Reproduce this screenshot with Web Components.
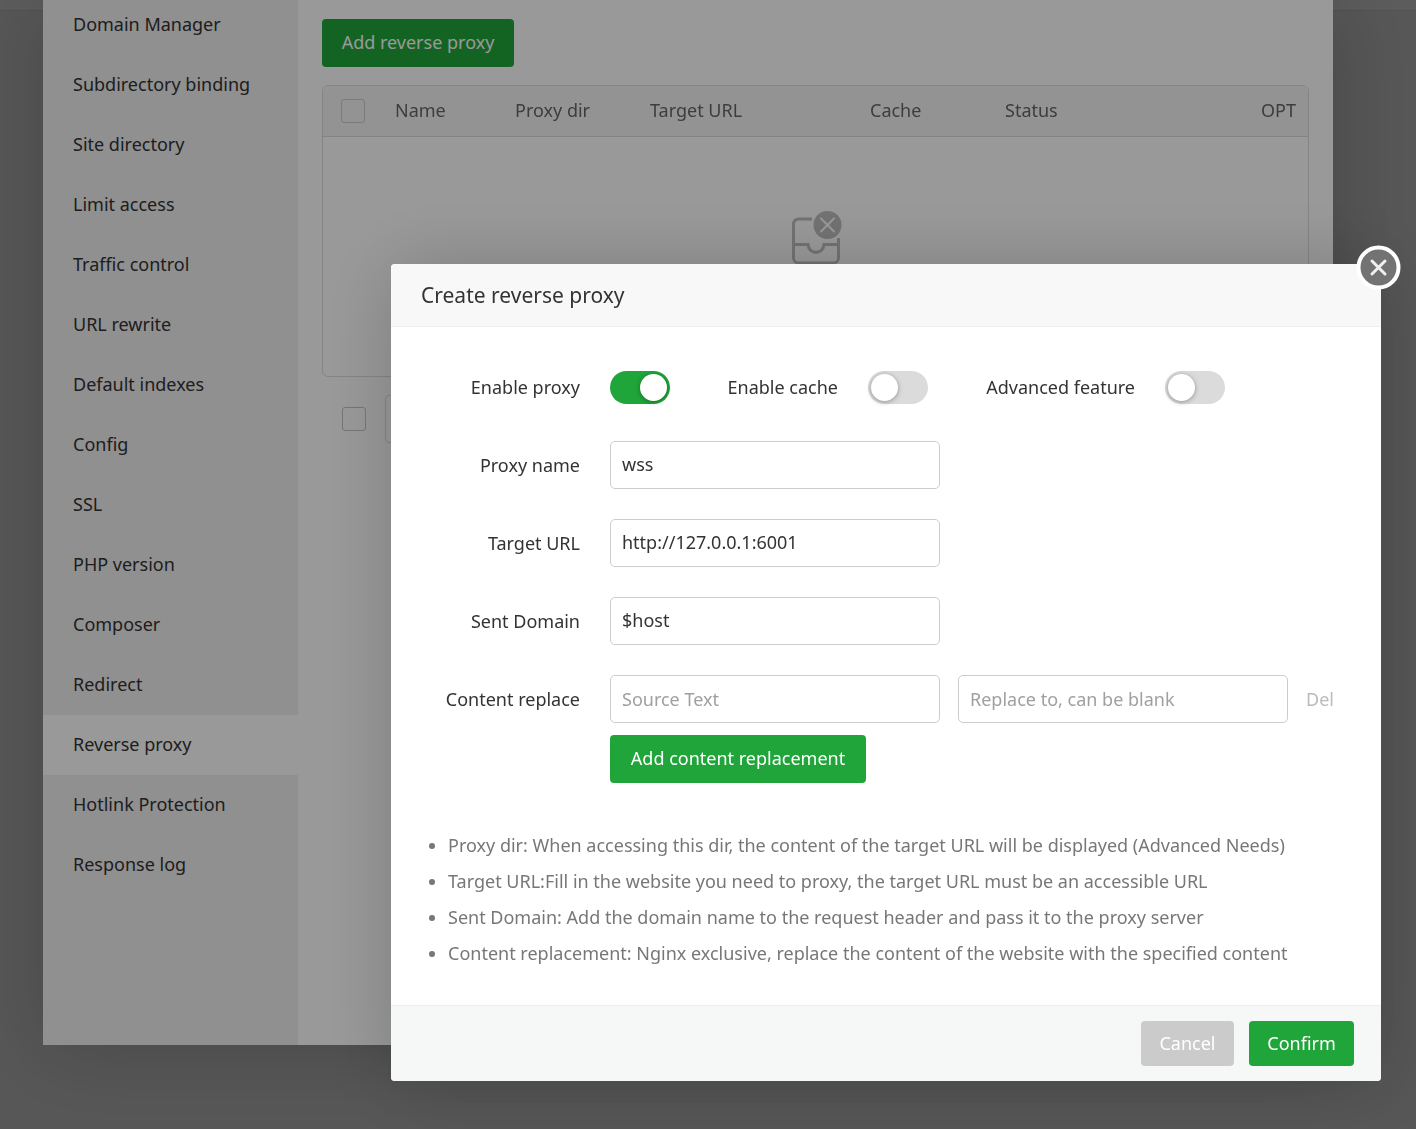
<!DOCTYPE html>
<html lang="en">
<head>
<meta charset="utf-8">
<title>Reverse proxy</title>
<style>
  body { margin: 0; min-height: 100vh; background: #f2f2f2; color: #333; font: 18px/24px "Noto Sans", "Open Sans", sans-serif; }
</style>
</head>
<body>
<panel-topbar></panel-topbar>

<modal-layer style="--inset: 0 83px 0 43px">
  <site-dialog>
    <side-menu slot="menu"></side-menu>
    <proxy-list></proxy-list>
  </site-dialog>
</modal-layer>

<modal-layer style="--inset: 264px 35px 0 391px">
  <form-dialog heading="Create reverse proxy">
    <toggle-row>
      <toggle-switch label="Enable proxy" checked style="--label: 189px"></toggle-switch>
      <toggle-switch label="Enable cache" style="--label: 168px"></toggle-switch>
      <toggle-switch label="Advanced feature" style="--label: 207px"></toggle-switch>
    </toggle-row>
    <form-field label="Proxy name" value="wss"></form-field>
    <form-field label="Target URL" value="http://127.0.0.1:6001"></form-field>
    <form-field label="Sent Domain" value="$host"></form-field>
    <replace-row></replace-row>
    <help-list></help-list>
    <ui-button slot="actions" kind="plain" style="--height: 45px; --width: 93px">Cancel</ui-button>
    <ui-button slot="actions" style="--height: 45px; --width: 105px">Confirm</ui-button>
  </form-dialog>
</modal-layer>

<script>
const define = (name, html, setup) => {
  const tpl = document.createElement('template');
  tpl.innerHTML = '<style>*{box-sizing:border-box}:host{display:block}</style>' + html;
  customElements.define(name, class extends HTMLElement {
    constructor() {
      super();
      this.attachShadow({ mode: 'open' }).append(tpl.content.cloneNode(true));
    }
    connectedCallback() { if (setup) setup(this, this.shadowRoot); }
  });
};

define('panel-topbar', `
  <style>:host { height: 10px; background: #fff; border-bottom: 1px solid #e4e4e4; }</style>`);

define('modal-layer', `
  <style>
    :host { position: fixed; inset: 0; padding: var(--inset); background: rgba(0, 0, 0, .4); box-sizing: border-box;
      --shadow: 2px 2px 75px rgba(0, 0, 0, .2); }
  </style>
  <slot></slot>`);

define('ui-button', `
  <style>
    :host { display: inline-block; }
    button { height: var(--height, 48px); min-width: var(--width, 0); padding: 0 16px 2px; border: 0; border-radius: 4px;
      background: #20a53a; color: #fff; font: inherit; white-space: nowrap; cursor: pointer; }
    :host([kind=plain]) button { background: #cbcbcb; }
  </style>
  <button type="button"><slot></slot></button>`);

define('check-box', `
  <style>
    :host { display: block; height: 24px; }
    input { appearance: none; display: block; width: 24px; height: 24px; margin: 0; border: 1px solid var(--line, #ccc); border-radius: 3px; }
  </style>
  <input type="checkbox" aria-label="Select all">`);

define('site-dialog', `
  <style>
    :host { display: flex; background: #fff; box-shadow: var(--shadow); }
    main { flex: 1; min-width: 0; padding: 19px 24px 24px; }
  </style>
  <slot name="menu"></slot>
  <main><slot></slot></main>`);

define('side-menu', `
  <style>
    :host { flex: 0 0 255px; background: #f0f0f0; overflow: hidden; }
    nav { display: flex; flex-direction: column; margin-top: -5px; padding-bottom: 150px; }
    a { padding: 0 30px 2px; line-height: 58px; color: #333; text-decoration: none; white-space: nowrap; }
    a[aria-current] { background: #fff; }
  </style>
  <nav></nav>`, (el, root) => {
  const items = ['Domain Manager', 'Subdirectory binding', 'Site directory', 'Limit access', 'Traffic control',
    'URL rewrite', 'Default indexes', 'Config', 'SSL', 'PHP version', 'Composer', 'Redirect', 'Reverse proxy',
    'Hotlink Protection', 'Response log'];
  root.querySelector('nav').innerHTML = items.map(t =>
    `<a href="#"${t === 'Reverse proxy' ? ' aria-current="page"' : ''}>${t}</a>`).join('');
});

define('proxy-list', `
  <style>
    :host { display: flex; flex-direction: column; gap: 18px; align-items: stretch; }
    .frame { border: 1px solid #ddd; border-radius: 6px; overflow: hidden; }
    table { width: 100%; border-collapse: separate; border-spacing: 0; table-layout: fixed; }
    th { height: 51px; padding: 0 18px; text-align: left; font-weight: 400; color: #666; background: #f6f6f6;
      border-bottom: 1px solid #ddd; white-space: nowrap; }
    th:not(:first-child) { padding-bottom: 2px; }
    th:last-child { padding-right: 12px; text-align: right; }
    td { height: 239px; padding: 73px 0 0; vertical-align: top; }
    svg { display: block; margin: 0 auto; }
    .bulk { display: flex; gap: 19px; align-items: center; padding-left: 20px; --line: #c4c4c4; }
    select { width: 200px; height: 48px; border: 1px solid #ddd; border-radius: 4px; background: #fff; appearance: none; }
  </style>
  <div><ui-button style="--width: 192px">Add reverse proxy</ui-button></div>
  <div class="frame">
    <table>
      <colgroup><col style="width:54px"><col style="width:120px"><col style="width:135px"><col style="width:220px"><col style="width:135px"><col style="width:135px"><col></colgroup>
      <thead><tr><th><check-box></check-box></th><th>Name</th><th>Proxy dir</th><th>Target URL</th><th>Cache</th><th>Status</th><th>OPT</th></tr></thead>
      <tbody><tr><td colspan="7">
        <svg width="52" height="56" viewBox="0 0 52 56" fill="none" stroke="#bfbfbf" stroke-width="3">
          <path d="M22 9H8.500a5 5 0 0 0-5 5v34a5 5 0 0 0 5 5h35a5 5 0 0 0 5-5V28"/>
          <path d="M3.500 34.500H18c1 10.500 15 10.500 16 0H48.500"/>
          <circle cx="37.500" cy="15" r="14" fill="#bfbfbf" stroke="none"/>
          <path d="M31 8.500l13 13M44 8.500l-13 13" stroke="#fff" stroke-width="2" stroke-linecap="round"/>
        </svg>
      </td></tr></tbody>
    </table>
  </div>
  <div class="bulk"><check-box></check-box><select aria-label="Batch operation"></select></div>`);

define('form-dialog', `
  <style>
    :host { position: relative; max-width: 990px; border-radius: 4px; background: #fff; box-shadow: var(--shadow); }
    header { padding: 0 30px; border-bottom: 1px solid #eee; border-radius: 4px 4px 0 0; background: #f8f8f8; }
    h2 { margin: 0; font-size: 21px; line-height: 62px; font-weight: 400; }
    form { display: flex; flex-direction: column; gap: 30px; padding: 36px 0 34px; }
    footer { display: flex; justify-content: flex-end; gap: 15px; padding: 15px 27px; border-top: 1px solid #eee;
      border-radius: 0 0 4px 4px; background: #f6f8f8; }
    .close { position: absolute; top: -19px; right: -20px; width: 45px; height: 45px; padding: 0; border: 0; background: none; }
    svg { display: block; }
  </style>
  <header><h2></h2></header>
  <form><slot></slot></form>
  <footer><slot name="actions"></slot></footer>
  <button class="close" type="button" aria-label="Close">
    <svg width="45" height="45" viewBox="0 0 45 45">
      <circle cx="22.500" cy="22.500" r="20" fill="#737373" stroke="#fff" stroke-width="4"/>
      <path d="M16 16l13 13M29 16l-13 13" stroke="#f0f0f0" stroke-width="3" stroke-linecap="round"/>
    </svg>
  </button>`, (el, root) => {
  root.querySelector('h2').textContent = el.getAttribute('heading');
});

define('toggle-row', `
  <style>:host { display: flex; align-items: center; height: 48px; }</style>
  <slot></slot>`);

define('toggle-switch', `
  <style>
    :host { display: flex; align-items: center; gap: 30px; }
    label { width: var(--label); text-align: right; white-space: nowrap; }
    input { appearance: none; display: flex; width: 60px; height: 33px; margin: 0; padding: 3px; border-radius: 17px; background: #dbdbdb; }
    input::before { content: ""; width: 27px; height: 27px; border-radius: 50%; background: #fff; box-shadow: 0 1px 5px rgba(0, 0, 0, .35); }
    input:checked { justify-content: flex-end; background: #20a53a; }
  </style>
  <label for="box"></label><input id="box" type="checkbox" role="switch">`, (el, root) => {
  root.querySelector('label').textContent = el.getAttribute('label');
  root.querySelector('input').checked = el.hasAttribute('checked');
});

define('form-field', `
  <style>
    :host { display: flex; align-items: center; gap: 30px; }
    label { flex: 0 0 189px; text-align: right; white-space: nowrap; }
    input { flex: 0 1 330px; width: 330px; min-width: 0; height: 48px; padding: 0 11px 2px; border: 1px solid #ccc; border-radius: 5px;
      background: #fff; color: #333; font: inherit; }
    input:placeholder-shown { padding-bottom: 0; }
    input::placeholder { color: #a0a0a0; opacity: 1; }
    :host([bare]) label { display: none; }
  </style>
  <label for="text"></label><input id="text" type="text">`, (el, root) => {
  const input = root.querySelector('input');
  root.querySelector('label').textContent = el.getAttribute('label') || '';
  input.value = el.getAttribute('value') || '';
  input.placeholder = el.getAttribute('placeholder') || '';
  if (el.hasAttribute('bare')) input.setAttribute('aria-label', input.placeholder);
});

define('replace-row', `
  <style>
    :host { display: flex; flex-direction: column; gap: 12px; }
    .line { display: flex; align-items: center; gap: 18px; }
    .add { padding-left: 219px; }
    a { color: #bbb; text-decoration: none; }
  </style>
  <div class="line">
    <form-field label="Content replace" placeholder="Source Text"></form-field>
    <form-field bare placeholder="Replace to, can be blank"></form-field>
    <a href="#">Del</a>
  </div>
  <div class="add"><ui-button style="--width: 256px">Add content replacement</ui-button></div>`);

define('help-list', `
  <style>
    ul { margin: 14px 0 0; padding: 0 30px 0 57px; color: #777; line-height: 36px; }
  </style>
  <ul>
    <li>Proxy dir: When accessing this dir, the content of the target URL will be displayed (Advanced Needs)</li>
    <li>Target URL:Fill in the website you need to proxy, the target URL must be an accessible URL</li>
    <li>Sent Domain: Add the domain name to the request header and pass it to the proxy server</li>
    <li>Content replacement: Nginx exclusive, replace the content of the website with the specified content</li>
  </ul>`);
</script>
</body>
</html>
